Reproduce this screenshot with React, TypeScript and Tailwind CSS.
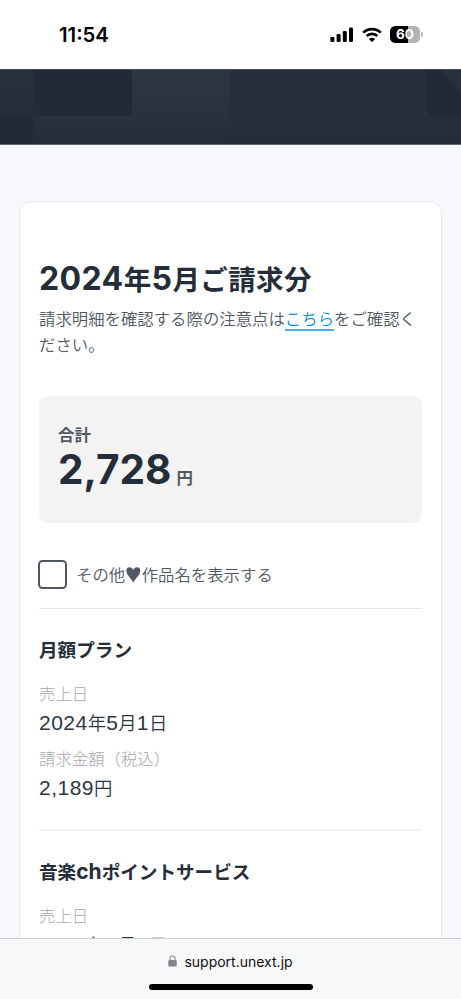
type BillingItem = {
    title: string;
    latin?: string;
    rest?: string;
    amount: string;
};

const items: BillingItem[] = [
    {title: "月額プラン", amount: "2,189"},
    {title: "音楽", latin: "ch", rest: "ポイントサービス", amount: "539"},
];

function StatusBar()
{
    return (
        <header className="flex h-[69px] shrink-0 items-start justify-between bg-white pl-[59px] pr-[38px] pt-6 text-black">
            <span className="font-['Inter',sans-serif] text-[20.3px] font-semibold leading-[22px]">11:54</span>
            <div className="flex h-[21px] items-center gap-[8px]">
                <svg width="24" height="16" viewBox="0 0 24 16" fill="currentColor">
                    <rect x="0.4" y="10" width="4" height="5" rx="1.2" />
                    <rect x="6.6" y="7" width="4" height="8" rx="1.2" />
                    <rect x="12.8" y="4" width="4" height="11" rx="1.2" />
                    <rect x="19" y="0.6" width="4" height="14.4" rx="1.2" />
                </svg>
                <svg width="20" height="16" viewBox="0 0 20 16" fill="none" stroke="currentColor" strokeWidth="2.7">
                    <path d="M1.2 5.6C6.1 .9 13.9 .9 18.8 5.6" />
                    <path d="M4.6 9C7.6 6.1 12.4 6.1 15.4 9" />
                    <path d="M10 15L6.8 11.9C8.6 10.3 11.4 10.3 13.2 11.9Z" fill="currentColor" stroke="none" />
                </svg>
                <div className="flex items-center gap-px">
                    <div className="flex h-[17px] w-[30px] items-center justify-center rounded-[5.5px] bg-linear-to-r from-black from-60% to-[#b3b3b3] to-60% font-['Inter',sans-serif] text-[13.5px] font-bold leading-none text-white">
                        60
                    </div>
                    <div className="h-[5px] w-[2px] rounded-r-full bg-[#b3b3b3]" />
                </div>
            </div>
        </header>
    );
}

function Banner()
{
    return (
        <div className="h-[76px] shrink-0 border-b border-[#5f6973] bg-[#252f3b]">
            <svg width="461" height="75" viewBox="0 0 461 75">
                <defs>
                    <linearGradient id="tile" x1="0" y1="0" x2="0" y2="1">
                        <stop offset="0" stopColor="#2d3642" />
                        <stop offset="1" stopColor="#28323e" />
                    </linearGradient>
                    <linearGradient id="shade" x1="0" y1="0" x2="0" y2="1">
                        <stop offset="0" stopColor="#28323e" />
                        <stop offset="1" stopColor="#232d39" />
                    </linearGradient>
                </defs>
                <rect width="461" height="75" fill="url(#shade)" />
                <rect x="33" width="99" height="47" fill="#212a36" />
                <rect x="132" width="98" height="47" fill="url(#tile)" />
                <rect x="230" width="197" height="47" fill="#262f3b" />
                <rect x="427" width="34" height="47" fill="#212b37" />
                <path d="M442 0Q448 12 461 22V0Z" fill="#2b303d" />
                <rect y="47" width="33" height="28" fill="#212b37" />
                <rect x="33" y="47" width="197" height="28" fill="url(#shade)" />
                <rect width="461" height="1" fill="#414954" />
            </svg>
        </div>
    );
}

function Num(prop:{children:string})
{
    return <span className="font-['Liberation_Sans',sans-serif] text-[21px] tracking-[0.5px]">{prop.children}</span>;
}

function Item(prop:{item:BillingItem})
{
    const {title, latin, rest, amount} = prop.item;
    return (
        <section className="h-[222px] border-b-2 border-[#f0f0f1] pt-6 text-[#242e3a]">
            <h2 className="h-8 whitespace-nowrap text-[18.6px] font-bold leading-8">
                {title}
                {latin && <span className="font-['Inter',sans-serif] text-[21px]">{latin}</span>}
                {rest}
            </h2>
            <dl className="pt-[15px]">
                <dt className="h-[26px] text-[16.4px] font-light leading-[26px] text-[#a5a9ae]">売上日</dt>
                <dd className="h-[31px] whitespace-nowrap text-[18.4px] font-[350] leading-[33px] text-[#2d3743]">
                    <Num>2024</Num>年<Num>5</Num>月<Num>1</Num>日
                </dd>
                <dt className="mt-2 h-[26px] text-[16.4px] font-light leading-[26px] text-[#a5a9ae]">請求金額（税込）</dt>
                <dd className="h-[31px] whitespace-nowrap text-[18.4px] font-[350] leading-[32px] text-[#2d3743]">
                    <Num>{amount}</Num>円
                </dd>
            </dl>
        </section>
    );
}

export default function App()
{
    return (
        <div className="flex h-[999px] w-[461px] flex-col overflow-hidden bg-[#f7f8fb] font-['Noto_Sans_CJK_JP',sans-serif]">
            <StatusBar />
            <Banner />
            <main className="min-h-0 flex-1 overflow-hidden px-[19px] pt-14">
                <div className="h-[900px] rounded-t-[12px] border border-[#e8e9eb] bg-white px-[19px] pt-[52px]">
                    <h1 className="h-12 whitespace-nowrap text-[27.5px] font-bold leading-[48px] tracking-[0.4px] text-[#242e3a]">
                        <span className="font-['Inter',sans-serif] text-[32px]">2024</span>年
                        <span className="font-['Inter',sans-serif] text-[32px]">5</span>月ご請求分
                    </h1>
                    <p className="mt-[3px] w-[383px] text-[16.4px] font-[350] leading-[26px] text-[#505963]">
                        請求明細を確認する際の注意点は
                        <a href="#" className="bg-linear-to-t from-[#4da9e8] from-[2px] to-transparent to-[2px] pb-px text-[#0a8ce2]">こちら</a>
                        をご確認ください。
                    </p>

                    <div className="mt-[39px] h-[127px] rounded-[9px] bg-[#f3f3f3] px-[19px] pt-[25px]">
                        <p className="h-[26px] text-[16.4px] font-bold leading-[26px] text-[#505963]">合計</p>
                        <p className="flex h-[44px] items-baseline leading-[46px]">
                            <span className="font-['Inter',sans-serif] text-[40.5px] font-bold text-[#242e3a]">2,728</span>
                            <span className="ml-[5px] text-[16.4px] font-bold text-[#505963]">円</span>
                        </p>
                    </div>

                    <label className="mt-[37px] flex h-[29px] items-center text-[16.4px] font-[350] leading-[26px] text-[#505963]">
                        <span className="mr-[9px] size-[29px] rounded-[4.5px] border-[2.5px] border-[#505963] -ml-px" />
                        <span className="-mt-[2px] flex items-center">
                            その他
                            <svg width="16.5" height="17" viewBox="0 0 16 17" fill="currentColor" className="mt-[2px]">
                                <path d="M8 16.400Q6.500 14 4 11Q1 7.600 1 4.800C1 .400 6.600 .200 8 4C9.400 .200 15 .400 15 4.800Q15 7.600 12 11Q9.500 14 8 16.400Z" />
                            </svg>
                            作品名を表示する
                        </span>
                    </label>
                    <div className="mt-[19px] border-t border-[#e3e4e6]">
                        {items.map((item) => (
                            <Item key={item.title} item={item} />
                        ))}
                    </div>
                </div>
            </main>

            <footer className="flex h-[61px] shrink-0 flex-col items-center border-t border-[#cbcdd0] bg-[#f7f8fa] pt-3">
                <div className="flex h-5 items-center gap-[7px] font-['Inter',sans-serif] text-[14px] text-[#111]">
                    <svg width="9" height="12" viewBox="0 0 9 12" fill="#85868c">
                        <rect x="0.3" y="5" width="8.4" height="6.6" rx="1.2" />
                        <path d="M2 5.500V3.500a2.500 2.500 0 0 1 5 0V5.500" fill="none" stroke="#85868c" strokeWidth="1.1" />
                    </svg>
                    support.unext.jp
                </div>
                <div className="mt-[13px] h-[6px] w-[164px] rounded-full bg-black" />
            </footer>
        </div>
    );
}
